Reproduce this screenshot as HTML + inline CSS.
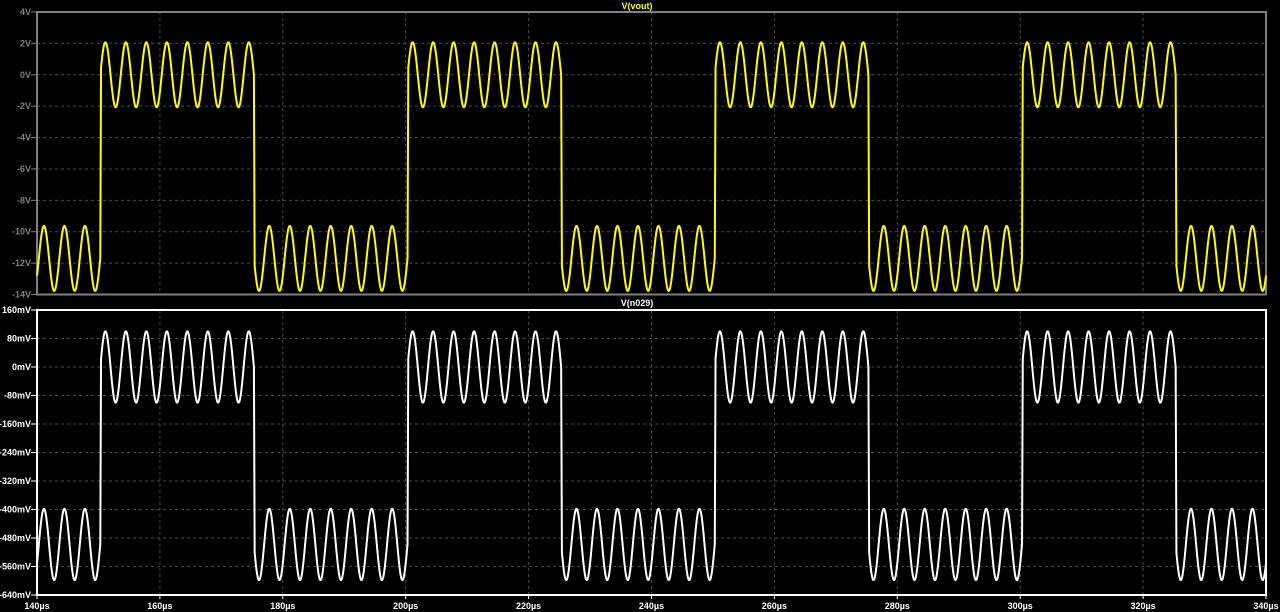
<!DOCTYPE html>
<html><head><meta charset="utf-8"><style>
html,body{margin:0;padding:0;background:#000;width:1280px;height:612px;overflow:hidden}
svg{display:block}
text{font-family:"Liberation Sans",sans-serif;font-size:9px;font-weight:bold}
</style></head><body>
<svg id="s" width="1280" height="612" xmlns="http://www.w3.org/2000/svg">
<g id="grid"></g>
<rect x="37" y="12" width="1229" height="282.5" fill="none" stroke="#808080" stroke-width="2"/>
<rect x="37" y="310" width="1229" height="285" fill="none" stroke="#fff" stroke-width="2"/>
<text x="637" y="9" fill="#ffff00" text-anchor="middle">V(vout)</text>
<text x="637" y="306" fill="#fff" text-anchor="middle">V(n029)</text>
<path id="p1" fill="none" stroke="#ffff00" stroke-width="2"/>
<path id="p2" fill="none" stroke="#fff" stroke-width="2"/>
<g id="lab"></g>
</svg>
<script>
var NS="http://www.w3.org/2000/svg";
var x0=37,x1=1266,g=document.getElementById('grid'),lab=document.getElementById('lab');
function el(t,a,p,txt){var e=document.createElementNS(NS,t);for(var k in a)e.setAttribute(k,a[k]);if(txt)e.textContent=txt;p.appendChild(e);return e;}
function X(t){return x0+(t-140)*(x1-x0)/200;}
for(var i=1;i<10;i++){var x=X(140+20*i);
 el('line',{x1:x,y1:12,x2:x,y2:294,stroke:'#4a4a4a','stroke-dasharray':'3,3','stroke-width':1},g);
 el('line',{x1:x,y1:310,x2:x,y2:595,stroke:'#4a4a4a','stroke-dasharray':'3,3','stroke-width':1},g);}
for(var i=0;i<=10;i++){var x=X(140+20*i);
 el('text',{x:x,y:609,fill:'#fff','text-anchor':'middle'},lab,(140+20*i)+'µs');
 el('line',{x1:x,y1:595,x2:x,y2:599,stroke:'#fff','stroke-width':1},lab);}
var tt=12,tb=294.5;
function Y1(v){return tt+(4-v)*(tb-tt)/18;}
for(var v=4;v>=-14;v-=2){var y=Y1(v);
 if(v<4&&v>-14)el('line',{x1:37,y1:y,x2:1266,y2:y,stroke:'#4a4a4a','stroke-dasharray':'3,3','stroke-width':1},g);
 el('line',{x1:31,y1:y,x2:37,y2:y,stroke:'#808080','stroke-width':1},lab);
 el('text',{x:31,y:y+3,fill:'#808080','text-anchor':'end'},lab,v+'V');}
var bt=310,bb=595;
function Y2(v){return bt+(160-v)*(bb-bt)/800;}
for(var v=160;v>=-640;v-=80){var y=Y2(v);
 if(v<160&&v>-640)el('line',{x1:37,y1:y,x2:1266,y2:y,stroke:'#4a4a4a','stroke-dasharray':'3,3','stroke-width':1},g);
 el('line',{x1:31,y1:y,x2:37,y2:y,stroke:'#fff','stroke-width':1},lab);
 el('text',{x:31,y:y+3,fill:'#fff','text-anchor':'end'},lab,v+'mV');}
var D=0.3;
function sq(t){var p=((t-150-D)%50+50)%50;var tr=0.12;
 if(p<tr)return p/tr; if(p<25)return 1; if(p<25+tr)return 1-(p-25)/tr; return 0;}
function mk(lo,hi,amp,Y){var d='';for(var t=140;t<=340.0001;t+=0.02){var s=sq(t);var v=lo+(hi-lo)*s+amp*Math.sin(2*Math.PI*(t-D)/3.3333);d+=(d?'L':'M')+X(t).toFixed(2)+','+Y(v).toFixed(2);}return d;}
document.getElementById('p1').setAttribute('d',mk(-11.7,0,2.07,Y1));
document.getElementById('p2').setAttribute('d',mk(-498,0,100,Y2));
</script>
</body></html>
